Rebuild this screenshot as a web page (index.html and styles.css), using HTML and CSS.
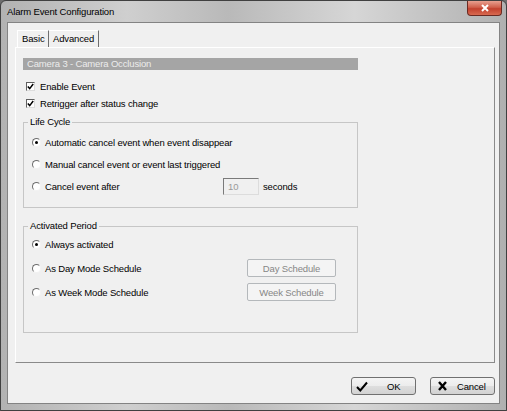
FILE: index.html
```
<!DOCTYPE html>
<html lang="en">
<head>
  <meta charset="UTF-8">
  <meta name="viewport" content="width=device-width, initial-scale=1.0">
  <title>Alarm Event Configuration</title>
  <link rel="stylesheet" href="styles.css">
</head>
<body>
  <div class="window">
    <div class="titlebar">
      <span class="title">Alarm Event Configuration</span>
      <button class="close">
        <svg width="10" height="8" viewBox="0 0 10 8"><path d="M2 1 L8 7 M8 1 L2 7" stroke="#fff" stroke-width="2"/></svg>
      </button>
    </div>

    <div class="client">
      <div class="tabs">
        <div class="tab active">Basic</div>
        <div class="tab">Advanced</div>
      </div>

      <div class="panel">
        <div class="cam-title">Camera 3 - Camera Occlusion</div>

        <label class="check-row first">
          <span class="check"><svg width="7" height="7" viewBox="0 0 7 7"><path d="M0.8 3.4 L2.7 5.6 L6.2 1" stroke="#000" stroke-width="1.5" fill="none"/></svg></span>
          Enable Event
        </label>
        <label class="check-row">
          <span class="check"><svg width="7" height="7" viewBox="0 0 7 7"><path d="M0.8 3.4 L2.7 5.6 L6.2 1" stroke="#000" stroke-width="1.5" fill="none"/></svg></span>
          Retrigger after status change
        </label>

        <fieldset class="group life">
          <legend class="group-title">Life Cycle</legend>
          <div class="options">
            <div class="opt"><span class="radio on"></span>Automatic cancel event when event disappear</div>
            <div class="opt"><span class="radio"></span>Manual cancel event or event last triggered</div>
            <div class="opt">
              <span class="radio"></span>
              <span class="delay-label">Cancel event after</span>
              <input class="num" type="text" value="10" disabled>
              <span class="unit">seconds</span>
            </div>
          </div>
        </fieldset>

        <fieldset class="group period">
          <legend class="group-title">Activated Period</legend>
          <div class="options">
            <div class="opt"><span class="radio on"></span>Always activated</div>
            <div class="opt"><span class="radio"></span>As Day Mode Schedule<button class="sched-btn" disabled>Day Schedule</button></div>
            <div class="opt"><span class="radio"></span>As Week Mode Schedule<button class="sched-btn" disabled>Week Schedule</button></div>
          </div>
        </fieldset>
      </div>

      <div class="footer">
        <button class="btn ok">
          <svg width="12" height="11" viewBox="0 0 12 11"><path d="M1 6 L4.3 9.4 L11 1.5" stroke="#000" stroke-width="2" fill="none"/></svg>
          <span class="btn-text">OK</span>
        </button>
        <button class="btn cancel">
          <svg width="9" height="10" viewBox="0 0 9 10"><path d="M1 1 L8 9 M8 1 L1 9" stroke="#000" stroke-width="2.4"/></svg>
          <span class="btn-text">Cancel</span>
        </button>
      </div>
    </div>
  </div>
</body>
</html>
```

FILE: styles.css
```
* {
  box-sizing: border-box;
}

body {
  margin: 0;
  font-family: "Liberation Sans", Arial, sans-serif;
  font-size: 9.5px;
  letter-spacing: -0.15px;
  color: #000;
  background: #6d6d6d;
}

.window {
  width: 507px;
  height: 411px;
  border: 1px solid #404040;
  border-radius: 6px 6px 0 0;
  background: linear-gradient(90deg, #b2b2b2, #cfcfcf 25%, #b9b9b9 45%, #d6d6d6 70%, #b0b0b0);
  display: flex;
  flex-direction: column;
}

.titlebar {
  height: 21px;
  display: flex;
  align-items: center;
  padding-left: 6px;
}

.title {
  flex: 1;
}

.close {
  align-self: flex-start;
  width: 35px;
  height: 15px;
  margin-right: 4px;
  padding: 0;
  border: 1px solid #6b2a22;
  border-top: none;
  border-radius: 0 0 4px 4px;
  background: linear-gradient(#e8a090, #d0604c 45%, #c2412e 55%, #d86a50);
  display: flex;
  align-items: center;
  justify-content: center;
}

.client {
  margin: 0 6px;
  height: 382px;
  border: 1px solid #838383;
  background: #f0f0f0;
  display: flex;
  flex-direction: column;
}

.tabs {
  display: flex;
  height: 17px;
  margin: 7px 0 0 9px;
}

.tab {
  padding: 0 4px;
  line-height: 16px;
  border-top: 1px solid #fff;
  border-right: 1px solid #6f6f6f;
}

.tab.active {
  border-left: 1px solid #fff;
  width: 32px;
}

.panel {
  margin-left: 7px;
  width: 480px;
  height: 316px;
  border: 1px solid;
  border-color: #fff #8a8a8a #8a8a8a #fff;
  padding: 10px 0 0 7px;
}

.cam-title {
  width: 335px;
  height: 12px;
  line-height: 12px;
  padding-left: 4px;
  background: #a5a5a5;
  color: #ececec;
}

.check-row {
  display: flex;
  align-items: center;
  height: 17px;
  padding-left: 3px;
}

.check-row.first {
  margin-top: 8px;
}

.check {
  width: 9px;
  height: 9px;
  margin-right: 5px;
  border: 1px solid;
  border-color: #5f5f5f #dcdcdc #dcdcdc #5f5f5f;
  background: #fff;
  display: flex;
  align-items: center;
  justify-content: center;
}

.group {
  width: 335px;
  margin: 0;
  border: 1px solid #c6c6c6;
  padding: 4px 21px 11px 8px;
}

.life {
  margin-top: 4px;
}

.period {
  margin-top: 12px;
  padding-top: 2px;
  padding-bottom: 30px;
}

.group-title {
  margin-left: -4px;
  padding: 0 2px;
  line-height: 12px;
}

.options {
  display: flex;
  flex-direction: column;
  gap: 2px;
}

.period .options {
  gap: 4px;
}

.opt {
  display: flex;
  align-items: center;
  height: 20px;
}

.radio {
  width: 9px;
  height: 9px;
  margin-right: 4px;
  border-radius: 50%;
  border: 1px solid;
  border-color: #6d6d6d #f2f2f2 #f2f2f2 #6d6d6d;
  background: #fff;
  display: flex;
  align-items: center;
  justify-content: center;
}

.radio.on::after {
  content: "";
  width: 3px;
  height: 3px;
  border-radius: 50%;
  background: #000;
}

.delay-label {
  width: 178px;
}

.num {
  width: 36px;
  height: 17px;
  padding: 0 0 0 4px;
  border: 1px solid;
  border-color: #7a7a7a #dcdcdc #dcdcdc #7a7a7a;
  background: #f0f0f0;
  color: #9a9a9a;
  font: inherit;
  letter-spacing: inherit;
}

.unit {
  margin-left: 4px;
}

.sched-btn {
  margin-left: auto;
  width: 89px;
  height: 18px;
  padding: 0;
  border: 1px solid #b4b8bb;
  border-radius: 2px;
  background: #f4f4f4;
  color: #868686;
  font: inherit;
  letter-spacing: inherit;
}

.footer {
  display: flex;
  justify-content: flex-end;
  gap: 14px;
  padding: 14px 4px 0 0;
}

.btn {
  width: 65px;
  height: 18px;
  padding: 0;
  border: 1px solid #707070;
  border-radius: 3px;
  background: linear-gradient(#f4f4f4, #ececec 50%, #dedede 51%, #d2d2d2);
  display: flex;
  align-items: center;
  font: inherit;
  letter-spacing: inherit;
  color: #000;
}

.ok {
  padding-left: 4px;
}

.ok .btn-text {
  margin-left: 19px;
}

.cancel {
  padding-left: 7px;
}

.cancel .btn-text {
  margin-left: 10px;
}
```
